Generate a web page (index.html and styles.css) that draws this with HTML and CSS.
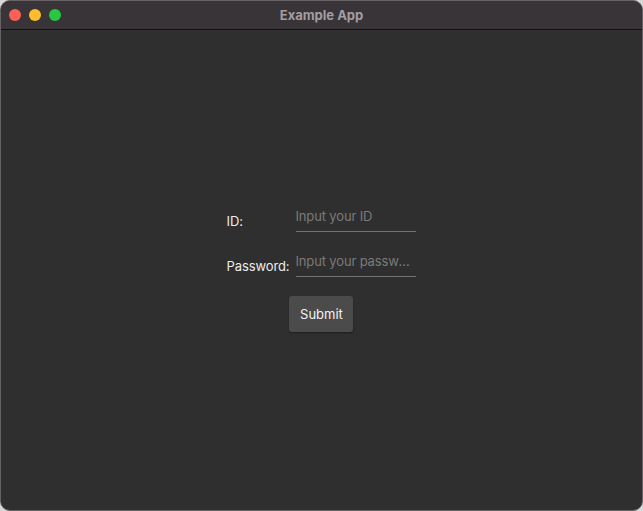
FILE: index.html
```html
<!DOCTYPE html>
<html lang="en">
<head>
    <meta charset="UTF-8">
    <meta name="viewport" content="width=device-width, initial-scale=1.0">
    <title>Example App</title>
    <link rel="stylesheet" href="styles.css">
</head>
<body>
    <div class="window">
        <div class="titlebar">
            <div class="lights">
                <span class="light red"></span>
                <span class="light yellow"></span>
                <span class="light green"></span>
            </div>
            <div class="title">Example App</div>
        </div>
        <div class="content">
            <form class="login" onsubmit="return false">
                <label for="id">ID:</label>
                <input type="text" id="id" placeholder="Input your ID">
                <label for="password">Password:</label>
                <input type="password" id="password" placeholder="Input your password">
                <button type="submit">Submit</button>
            </form>
        </div>
    </div>
</body>
</html>
```

FILE: styles.css
```css
html, body {
    margin: 0;
    height: 100%;
    background-color: #d8d8d8;
}
body {
    font-family: 'Inter', 'Noto Sans', sans-serif;
}
.window {
    box-sizing: border-box;
    height: 100%;
    display: flex;
    flex-direction: column;
    border: 1px solid #666266;
    border-radius: 10px;
    overflow: hidden;
    background-color: #2f2f2f;
}
.titlebar {
    position: relative;
    height: 28px;
    flex-shrink: 0;
    background-color: #383438;
    border-bottom: 1px solid #111;
    display: flex;
    align-items: center;
    justify-content: center;
}
.lights {
    position: absolute;
    left: 8px;
    top: 8px;
    display: flex;
    gap: 8px;
}
.light {
    width: 12px;
    height: 12px;
    border-radius: 50%;
}
.red { background-color: #fe5f57; }
.yellow { background-color: #febc2e; }
.green { background-color: #28c840; }
.title {
    color: #a29ea1;
    font-size: 13px;
    font-weight: 700;
}
.content {
    flex: 1;
    display: flex;
    align-items: center;
    justify-content: center;
    padding-bottom: 4px;
}
.login {
    display: grid;
    grid-template-columns: auto 120px;
    column-gap: 6px;
    row-gap: 18px;
    align-items: center;
    margin-right: 1px;
}
label {
    color: #ececec;
    font-size: 13px;
    letter-spacing: -0.1px;
    padding-top: 5px;
}
input {
    box-sizing: border-box;
    width: 120px;
    height: 27px;
    padding: 0 0 4px 0;
    background: transparent;
    border: none;
    border-bottom: 1px solid #727272;
    color: #ececec;
    font-family: 'Inter', 'Noto Sans', sans-serif;
    font-size: 13px;
    letter-spacing: -0.15px;
    text-overflow: ellipsis;
    outline: none;
}
input::placeholder {
    color: #7a7a7a;
}
button {
    grid-column: 1 / 3;
    justify-self: center;
    margin-top: 1px;
    margin-left: 1px;
    width: 64px;
    height: 36px;
    background-color: #4b4b4b;
    color: #f2f2f2;
    border: none;
    border-radius: 3px;
    box-shadow: 0 1px 2px rgba(0, 0, 0, 0.4);
    font-family: 'Inter', 'Noto Sans', sans-serif;
    font-size: 13px;
    cursor: pointer;
}
```
